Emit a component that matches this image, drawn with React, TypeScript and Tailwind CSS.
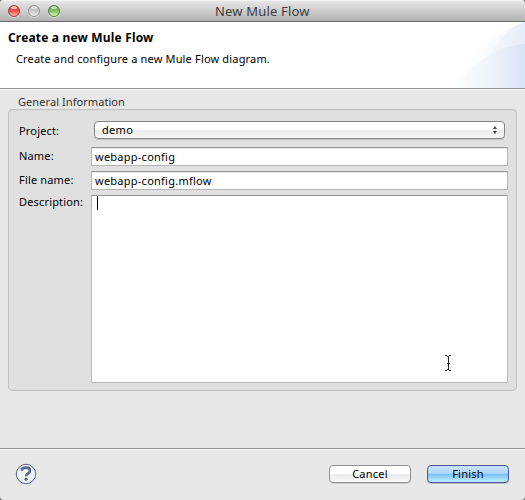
import React from "react";

function Light({ tone }: { tone: string }) {
  return (
    <span className={`relative block h-3 w-3 overflow-hidden rounded-full border shadow-[0_1px_0_#dedede] ${tone}`}>
      <span className="absolute left-[2px] top-0 h-[3px] w-[6px] rounded-full bg-white/60" />
    </span>
  );
}

function Field({ label, value }: { label: string; value: string }) {
  return (
    <div className="mb-[5px] flex h-[19px]">
      <span className="w-[72px] shrink-0 whitespace-nowrap leading-[18px]">{label}</span>
      <div className="h-[19px] w-[417px] border border-[#b5b5b5] border-t-[#929292] bg-white pl-[3px] leading-[18px] tracking-[0.25px] shadow-[inset_0_1px_1px_#e8e8e8]">
        {value}
      </div>
    </div>
  );
}

export default function App() {
  return (
    <div className="flex h-[500px] w-[525px] flex-col overflow-hidden bg-[#777] font-['Noto_Sans',sans-serif] text-[11px] tracking-[0.17px] text-black">
      <div className="flex h-full flex-col overflow-hidden rounded-[4px] bg-[#e8e8e8]">
        <div className="relative flex h-[22px] shrink-0 items-center border-b border-[#696969] bg-linear-to-b from-[#e9e9e9] to-[#b2b2b2] pl-2 shadow-[inset_0_1px_0_#f3f3f3]">
          <div className="flex gap-2">
            <Light tone="border-[#9e3b37] bg-linear-to-b from-[#c94b48] via-[#f0504c] to-[#ffb5ad]" />
            <Light tone="border-[#929292] bg-linear-to-b from-[#b5b5b5] via-[#c8c8c8] to-[#eeeeee]" />
            <Light tone="border-[#55803e] bg-linear-to-b from-[#669b51] via-[#7fc25e] to-[#d3f9b0]" />
          </div>
          <span className="absolute left-[215px] top-[2px] whitespace-nowrap text-[13px] leading-[18px] text-[#3c3c3c]">New Mule Flow</span>
        </div>

        <header className="relative h-[67px] shrink-0 border-b border-[#969696] bg-white pl-2 pt-[8px]">
          <svg className="absolute right-0 top-0" width="75" height="66" viewBox="0 0 75 66">
            <defs>
              <linearGradient id="outer">
                <stop offset="0" stopColor="#ffffff" />
                <stop offset="0.5" stopColor="#f9fbfe" />
                <stop offset="1" stopColor="#f0f4fc" />
              </linearGradient>
              <linearGradient id="mid">
                <stop offset="0" stopColor="#f9fbfe" />
                <stop offset="1" stopColor="#e5edf9" />
              </linearGradient>
              <linearGradient id="inner">
                <stop offset="0" stopColor="#ffffff" />
                <stop offset="0.45" stopColor="#f0f5fc" />
                <stop offset="1" stopColor="#dae2f6" />
              </linearGradient>
            </defs>
            <path d="M3 66C20 35 45 10 75 0V66Z" fill="url(#outer)" />
            <path d="M30 48C43 24 57 5 75 0V66H30Z" fill="url(#mid)" />
            <path d="M3 66C24 39 49 24 75 22V66Z" fill="url(#inner)" />
          </svg>
          <h1 className="whitespace-nowrap text-[12px] font-bold leading-[16px]">Create a new Mule Flow</h1>
          <p className="mt-[5px] whitespace-nowrap pl-2 leading-[16px]">Create and configure a new Mule Flow diagram.</p>
        </header>

        <main className="h-[359px] shrink-0 border-t border-white px-2 pt-[5px]">
          <div className="h-[14px] whitespace-nowrap pl-[10px] leading-[14px] tracking-[0.07px] text-[#333]">General Information</div>
          <section className="h-[282px] w-[509px] rounded-[4px] border border-[#c1c1c1] bg-[#e0e0e0] pl-[10px] pt-[11px] shadow-[inset_0_0_2px_#d0d0d0]">
            <div className="mb-[7px] flex h-[19px]">
              <span className="w-[75px] shrink-0 leading-[20px]">Project:</span>
              <div className="flex h-[18px] w-[411px] items-center justify-between rounded-[4px] border border-[#858585] bg-linear-to-b from-white from-45% via-[#ececec] via-55% to-[#f7f7f7] pl-[7px] pr-[6px] shadow-[0_1px_0_#c5c5c5]">
                <span className="leading-[16px] tracking-[0.3px]">demo</span>
                <svg width="6" height="8" viewBox="0 0 6 8" className="fill-[#444]"><path d="M3 0 5 3H1ZM1 5h4L3 8Z" /></svg>
              </div>
            </div>
            <Field label="Name:" value="webapp-config" />
            <Field label="File name:" value="webapp-config.mflow" />
            <div className="flex">
              <span className="w-[72px] shrink-0 whitespace-nowrap leading-[14px]">Description:</span>
              <div className="relative h-[188px] w-[417px] border border-[#b8b8b8] border-t-[#929292] bg-white">
                <span className="absolute left-[5px] top-0 h-[14px] w-px bg-black" />
                <svg className="absolute left-[352px] top-[158px]" width="8" height="18" viewBox="0 0 8 18" fill="none" stroke="#222" shapeRendering="crispEdges">
                  <path d="M1 1.5h2M5 1.5h2M3 2.5h2M4.5 3v12M3 9.5h3M3 15.5h2M1 16.5h2M5 16.5h2" />
                </svg>
              </div>
            </div>
          </section>
        </main>

        <footer className="flex flex-1 border-t border-[#969696] pl-[15px] shadow-[inset_0_1px_0_white]">
          <svg className="mt-[14px]" width="22" height="22" viewBox="0 0 22 22">
            <circle cx="11" cy="11" r="9.7" fill="#f0f1f3" stroke="#54678e" />
            <path d="M7 7.8V5.8Q8.8 4.6 11 4.6q4 0 4 3 0 1.8-2.1 3Q11.2 11.5 11.2 13.3" fill="none" stroke="#54678e" strokeWidth="2.6" />
            <circle cx="11.1" cy="16.2" r="1.6" fill="#54678e" />
          </svg>
          <button className="ml-[292px] mt-4 h-[18px] w-[82px] rounded-[4px] border border-[#919191] bg-linear-to-b from-white from-45% via-[#ececec] via-55% to-[#f9f9f9] leading-[14px] tracking-[0.25px] shadow-[0_1px_0_#cfcfcf]">Cancel</button>
          <button className="ml-4 mt-4 h-[18px] w-[82px] rounded-[4px] border border-[#4d5795] bg-[linear-gradient(#cbe2f8,#b0d7f8_45%,#7abff7_52%,#c2f0ff)] leading-[14px] tracking-[0.25px] shadow-[0_1px_0_#bcbcca]">Finish</button>
        </footer>
      </div>
    </div>
  );
}
